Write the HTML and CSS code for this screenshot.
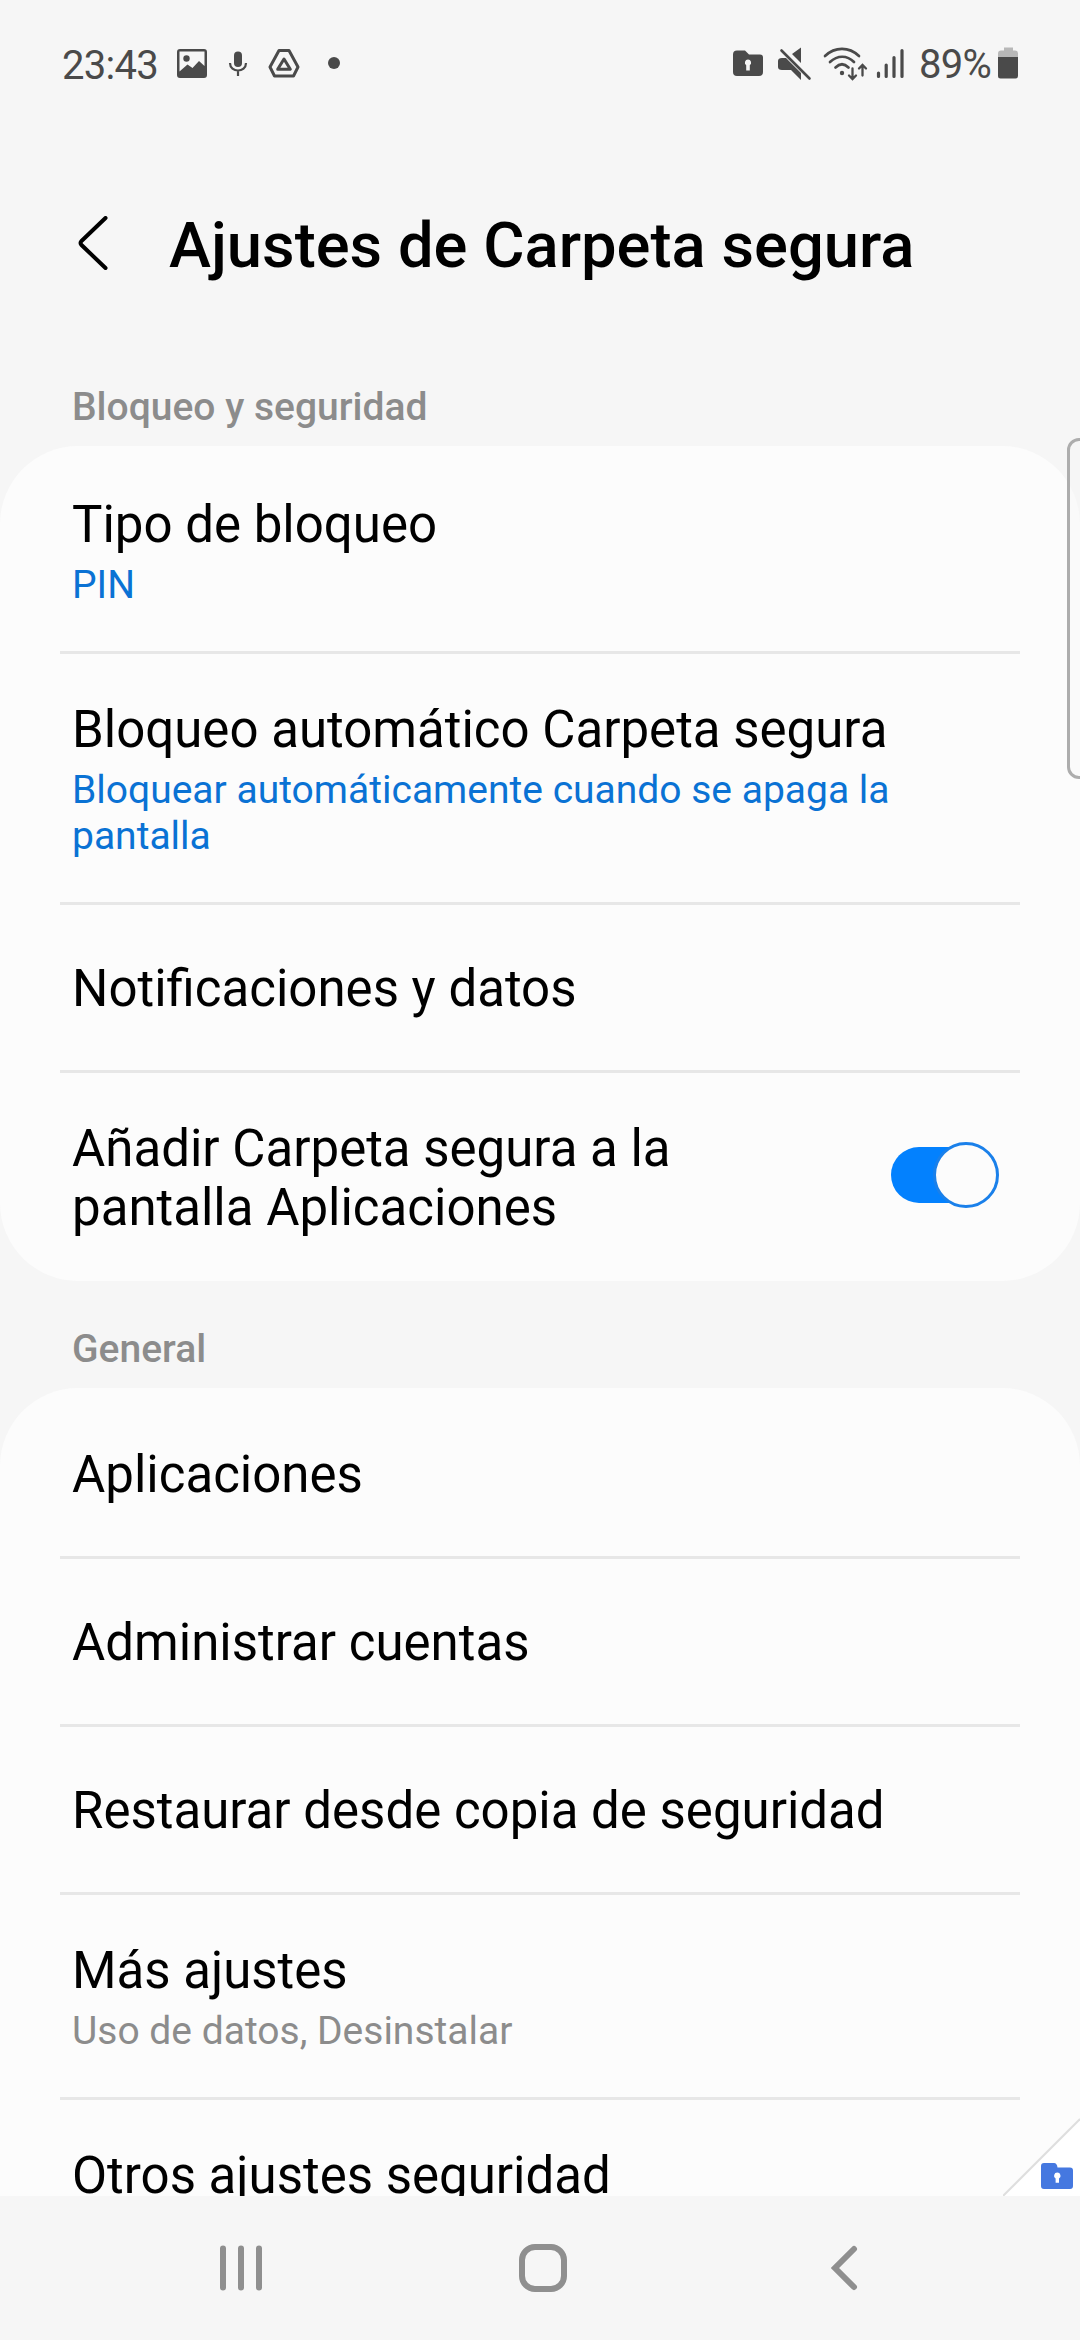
FILE: index.html
```html
<!DOCTYPE html>
<html lang="es">
<head>
  <meta charset="UTF-8">
  <title>Ajustes de Carpeta segura</title>
  <link rel="stylesheet" href="styles.css">
</head>
<body>

<div class="screen">
  <header class="status-bar">
    <span class="clock">23:43</span>
    <svg class="status-icons-left" width="166" height="34" viewBox="0 0 166 34">
      <!-- image -->
      <path fill="#4a4a4a" fill-rule="evenodd" d="M3 1h24a3 3 0 0 1 3 3v23a3 3 0 0 1-3 3H3a3 3 0 0 1-3-3V4a3 3 0 0 1 3-3zM2.500 3.500v20l8-7 5 3.500 6.500-7 5.500 5V3.500z"/>
      <circle cx="9.500" cy="10.500" r="3.200" fill="#4a4a4a"/>
      <!-- microphone -->
      <rect x="57" y="3.500" width="8" height="15.500" rx="4" fill="#4a4a4a"/>
      <path fill="none" stroke="#4a4a4a" stroke-width="2.200" d="M53 15c0 10 16 10 16 0M61 22v6"/>
      <!-- drive -->
      <g fill="none" stroke="#4a4a4a" stroke-width="3" stroke-linejoin="round">
        <path d="M102 2.500h10L121 19l-4.500 9h-19L93 19z"/>
        <path d="M107 11l6.300 10.300h-12.600z"/>
      </g>
      <circle cx="157" cy="15" r="6" fill="#4a4a4a"/>
    </svg>

    <div class="status-right">
      <svg width="172" height="36" viewBox="0 0 172 36">
        <!-- locked folder -->
        <path fill="#4a4a4a" d="M4 4.500h8l4 4h11q3 0 3 3V26q0 4-4 4H4q-4 0-4-4V8.500q0-4 4-4z"/>
        <path fill="#f6f6f6" d="M15 13.500a3.200 3.200 0 0 1 1.800 5.800v5.200h-3.600v-5.200a3.200 3.200 0 0 1 1.800-5.800z"/>
        <!-- muted speaker -->
        <path fill="#4a4a4a" d="M68 1.500V17L59 8zM49 12h4l15 15v7l-10-10h-9q-4 0-4-3v-6q0-3 4-3z"/>
        <path stroke="#4a4a4a" stroke-width="2.600" stroke-linecap="round" d="M48.500 4.500l28 28"/>
        <!-- wifi -->
        <g fill="none" stroke="#4a4a4a" stroke-width="2.700" stroke-linecap="round">
          <path d="M92 10c10-9.500 24-9.500 34 0M97 16c7.500-7 17-7 24 0M102.500 21.500c4.500-4.500 8.500-4.500 13 0"/>
          <path stroke-width="2.300" d="M119.500 22.500v10M116 29.500l3.500 3.500 3.500-3.500M129.500 29.500v-10M126 22.500l3.500-3.500 3.500 3.500"/>
        </g>
        <circle cx="109" cy="27" r="2.200" fill="#4a4a4a"/>
        <!-- signal -->
        <path stroke="#4a4a4a" stroke-width="3.200" stroke-linecap="round" d="M145.500 27v3.500M153.200 19v11.500M161 11.500v19M169 4.500v26"/>
      </svg>
      <span class="battery-level">89%</span>
      <svg width="20" height="36" viewBox="0 0 20 36">
        <path fill="#b8b8b8" d="M6 1.500h9v3h2q3 0 3 3v4H0v-4q0-3 3-3h3z"/>
        <path fill="#4a4a4a" d="M0 11h20v19q0 2.500-2.500 2.500h-15Q0 32.500 0 30z"/>
      </svg>
    </div>
  </header>

  <div class="title-bar">
    <svg width="30" height="56" viewBox="0 0 30 56">
      <path fill="none" stroke="#000" stroke-width="4" stroke-linecap="round" stroke-linejoin="round" d="M27.500 2L3.500 25q-2 2 0 4l24 23"/>
    </svg>
    <h1>Ajustes de Carpeta segura</h1>
  </div>

  <main class="content">
    <h2 class="section-title">Bloqueo y seguridad</h2>
    <ul class="card">
      <li class="row two-line">
        <span class="name">Tipo de bloqueo</span>
        <span class="value">PIN</span>
      </li>
      <li class="row three-line">
        <span class="name">Bloqueo automático Carpeta segura</span>
        <span class="value">Bloquear automáticamente cuando se apaga la<br>pantalla</span>
      </li>
      <li class="row">
        <span class="name">Notificaciones y datos</span>
      </li>
      <li class="row switch-row">
        <span class="name">Añadir Carpeta segura a la<br>pantalla Aplicaciones</span>
        <span class="switch"><span class="thumb"></span></span>
      </li>
    </ul>

    <h2 class="section-title general">General</h2>
    <ul class="card">
      <li class="row"><span class="name">Aplicaciones</span></li>
      <li class="row"><span class="name">Administrar cuentas</span></li>
      <li class="row"><span class="name">Restaurar desde copia de seguridad</span></li>
      <li class="row two-line">
        <span class="name">Más ajustes</span>
        <span class="value muted">Uso de datos, Desinstalar</span>
      </li>
      <li class="row two-line">
        <span class="name">Otros ajustes seguridad</span>
      </li>
    </ul>

    <svg class="corner" width="77" height="78" viewBox="0 0 77 78">
      <path fill="#fff" d="M77 1v77H0z"/>
      <path stroke="#dedede" stroke-width="2" d="M0 78L77 1"/>
      <path fill="#4578e0" d="M41 45h10q3 0 3.500 4.500H67q3 0 3 3V68q0 3-3 3H41q-3 0-3-3V48q0-3 3-3z"/>
      <path fill="#fff" d="M54.300 54.500a3.300 3.300 0 0 1 1.700 6.100v4.200h-3.400v-4.200a3.300 3.300 0 0 1 1.700-6.100z"/>
    </svg>
  </main>

  <nav class="nav-bar">
    <svg width="44" height="64" viewBox="0 0 44 64">
      <path stroke="#8f8f8f" stroke-width="6" stroke-linecap="round" d="M4 12.500v39M22 12.500v39M40 12.500v39"/>
    </svg>
    <svg class="home" width="48" height="64" viewBox="0 0 48 64">
      <rect x="3" y="11" width="42" height="42" rx="13" fill="none" stroke="#8f8f8f" stroke-width="6"/>
    </svg>
    <svg width="28" height="64" viewBox="0 0 28 64">
      <path fill="none" stroke="#8f8f8f" stroke-width="6" stroke-linecap="round" d="M23 13L4 32l19 19"/>
    </svg>
  </nav>

  <div class="edge-handle"></div>
</div>

</body>
</html>
```
FILE: styles.css
```css
* {
  box-sizing: border-box;
}

body {
  margin: 0;
  background: #f6f6f6;
  color: #000;
  font-family: Roboto, "Noto Sans", sans-serif;
}

.screen {
  position: relative;
  display: flex;
  flex-direction: column;
  width: 1080px;
  height: 2340px;
  overflow: hidden;
}

svg {
  display: block;
  flex: none;
}

.status-bar {
  display: flex;
  align-items: flex-start;
  height: 128px;
  padding: 46px 62px 0 62px;
  color: #4a4a4a;
}

.clock,
.battery-level {
  font-size: 40px;
  line-height: 38px;
  letter-spacing: -0.7px;
}

.clock {
  width: 115px;
  padding-top: 1px;
}

.status-icons-left {
  margin-top: 2px;
}

.status-right {
  display: flex;
  margin-left: auto;
}

.battery-level {
  width: 74px;
  margin: 0 5px 0 14px;
}

.title-bar {
  display: flex;
  align-items: center;
  height: 232px;
  padding: 0 78px;
}

.title-bar h1 {
  margin: 2px 0 0 61px;
  font-size: 63.300px;
  font-weight: 500;
  white-space: nowrap;
}

.content {
  position: relative;
  height: 1836px;
  overflow: hidden;
}

.section-title {
  height: 86px;
  margin: 0;
  padding: 24px 72px 0;
  color: #8c8c8c;
  font-size: 39px;
  line-height: 46px;
  font-weight: 500;
}

.general {
  height: 107px;
  padding-top: 45px;
}

.card {
  margin: 0;
  padding: 3px 0 0;
  list-style: none;
  background: #fcfcfc;
  border-radius: 78px;
}

.row {
  display: flex;
  flex-direction: column;
  height: 168px;
  margin: 0 60px;
  padding: 54px 12px 0;
  border-bottom: 3px solid #e7e7e7;
}

.row:last-child {
  border-bottom: none;
}

.two-line,
.three-line,
.switch-row {
  height: 205px;
  padding-top: 46px;
}

.three-line {
  height: 251px;
}

.name {
  font-size: 51px;
  line-height: 59px;
  white-space: nowrap;
}

.value {
  color: #0a72d4;
  font-size: 39px;
  line-height: 46px;
  margin-top: 8px;
  white-space: nowrap;
}

.muted {
  color: #8c8c8c;
}

.switch-row {
  flex-direction: row;
  justify-content: space-between;
  height: 208px;
}

.switch {
  display: flex;
  align-items: center;
  justify-content: flex-end;
  width: 108px;
  height: 56px;
  margin: 28px 9px 0 0;
  background: linear-gradient(90deg, #0381fe 80px, transparent 80px);
  border-radius: 28px;
}

.thumb {
  flex: none;
  width: 66px;
  height: 66px;
  background: #fcfcfc;
  border: 3px solid #1a80ea;
  border-radius: 50%;
}

.corner {
  position: absolute;
  right: 0;
  bottom: 0;
}

.nav-bar {
  display: flex;
  align-items: center;
  height: 144px;
  padding-left: 219px;
}

.home {
  margin: 0 264px 0 256px;
}

/* edge panel handle, half of it is off the screen */
.edge-handle {
  position: absolute;
  top: 438px;
  right: -12px;
  width: 25px;
  height: 341px;
  border: 3px solid #adadad;
  border-radius: 12px;
  background: rgba(246, 246, 246, 0.3);
}
```
